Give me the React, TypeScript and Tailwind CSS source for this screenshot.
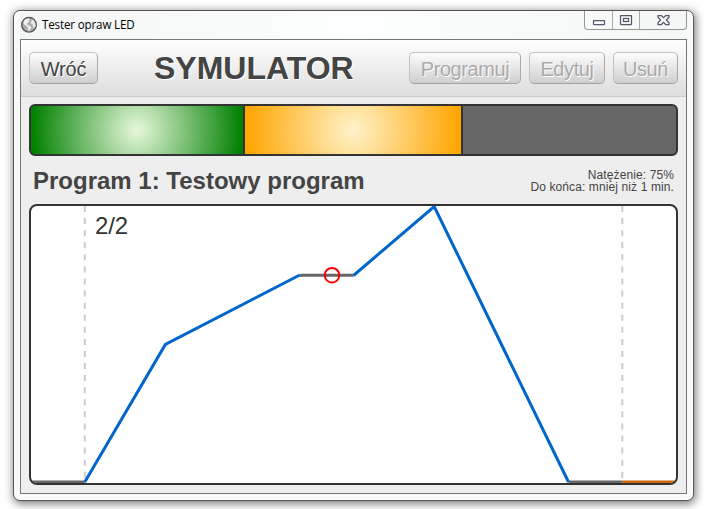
import React from "react";

function ToolButton({ label, width, disabled = false }: { label: string; width: string; disabled?: boolean }) {
  return (
    <button
      disabled={disabled}
      className={`${width} h-8 shrink-0 rounded-[5px] border border-[#c2c2c2] border-r-[#aaa] border-b-[#a2a2a2] bg-linear-to-b from-[#fdfdfd] to-[#cfcfcf] text-center text-[20px] leading-[32px] whitespace-nowrap [text-shadow:1px_1px_0_#fff] ${disabled ? "tracking-[-0.42px] text-[#aaa]" : "tracking-[-0.2px] text-[#444]"}`}
    >
      {label}
    </button>
  );
}

function GlobeIcon() {
  return (
    <svg width="18" height="18" viewBox="0 0 18 18">
      <circle cx="8" cy="8.8" r="7.3" fill="#adadad" stroke="#565656" strokeWidth="1.4" />
      <path d="M2.2 6 4.4 3.3 7.6 2.2 9 3.4 7.8 4.6 8 6 6.3 7.1 5.9 8.3 7.4 9.2 9.6 10.2 10.2 11.6 8.9 13.4 8.3 15.2 7 13.4 6.8 11.2 5.1 9.4 3 8.4Z" fill="#f0f0f0" />
      <path d="m10 2.7 2.6 1.3 1.8 3.2.3 2.6-1.4 2.6-1.5-1.8-.2-2.2-1.8-.8.2-2.2 1-.9Z" fill="#e6e6e6" />
    </svg>
  );
}

function WindowControls() {
  return (
    <div className="flex h-[19px] w-[103px] rounded-b-[4px] border border-t-0 border-[#919594]">
      <div className="w-7 border-r border-[#a6a9a8]">
        <svg width="27" height="18" viewBox="0 0 27 18">
          <rect x="8.5" y="9.5" width="11" height="4" rx=".5" fill="#f7f7f7" stroke="#55576b" strokeWidth="1.25" />
        </svg>
      </div>
      <div className="w-[27px] border-r border-[#a6a9a8]">
        <svg width="26" height="18" viewBox="0 0 26 18">
          <rect x="7.5" y="4.5" width="11" height="9" rx=".5" fill="#f7f7f7" stroke="#55576b" strokeWidth="1.25" />
          <rect x="10.5" y="7.5" width="5" height="3" fill="#fff" stroke="#55576b" strokeWidth="1.25" />
        </svg>
      </div>
      <div className="flex-1">
        <svg width="46" height="18" viewBox="0 0 46 18">
          <path d="M18 4.5h3.4L23.5 6.6l2.1-2.1H29v1.7L26.4 9l2.6 2.8v1.7h-3.4l-2.1-2.1-2.1 2.1H18v-1.7L20.6 9 18 6.2Z" fill="#f4f4f4" stroke="#55576b" strokeWidth="1.25" />
        </svg>
      </div>
    </div>
  );
}

function ProgramChart() {
  return (
    <svg width="645" height="277" viewBox="31 206 645 277" className="block">
      <g stroke="#ccc" strokeWidth="2" strokeDasharray="6 6.08">
        <path d="M84.8 206v277" />
        <path d="M622.3 206v277" />
      </g>
      <g fill="none" strokeWidth="3">
        <g stroke="#666">
          <path d="M31 482H84.8" />
          <path d="M299.8 275.2H353.5" />
          <path d="M568.5 482H622.3" />
        </g>
        <path d="M622.3 482H676" stroke="#cc6600" />
        <g stroke="#0066cc">
          <path d="M84.8 482 165.4 344.5 299.8 275" />
          <path d="M353.5 275.5 434.2 206.5 568.5 482" />
        </g>
      </g>
      <circle cx="332" cy="275.2" r="7.3" fill="none" stroke="#ff0000" strokeWidth="2" />
      <text x="95" y="234" fontSize="24" fill="#333" textLength="33">2/2</text>
    </svg>
  );
}

export default function App() {
  return (
    <div className="h-[509px] w-[707px] overflow-hidden bg-white pt-[10px] pl-[13px] font-['Liberation_Sans',Arial,sans-serif]">
      <div className="h-[491px] w-[681px] rounded-[7px] border border-[#555] bg-[#f8faf9] px-[6px] shadow-[1px_2px_9px_1px_rgba(0,0,0,0.5),inset_0_0_0_1px_#fff]">
        <div className="flex h-[28px] items-start justify-between rounded-t-[6px] bg-linear-to-r from-[#f4f6f5] via-[#fdfefe] to-[#f5f7f6]">
          <div className="flex items-center gap-[3px] pt-[5px] pl-[1px]">
            <GlobeIcon />
            <span className="origin-left scale-x-[0.965] font-['Open_Sans','Noto_Sans',sans-serif] text-[12px] leading-[18px] tracking-[-0.15px] whitespace-nowrap text-black">Tester opraw LED</span>
          </div>
          <WindowControls />
        </div>
        <main className="h-[455px] w-[667px] border border-[#777] bg-[#eee]">
          <header className="flex h-[57px] items-start border-b border-[#ccc] bg-linear-to-b from-white to-[#ddd] px-2 pt-[12px]">
            <ToolButton label="Wróć" width="w-[69px]" />
            <h1 className="ml-[56px] w-[255px] text-[32px] leading-[32px] font-bold whitespace-nowrap text-[#444] [text-shadow:1px_1px_0_#fff]">SYMULATOR</h1>
            <div className="flex gap-2">
              <ToolButton label="Programuj" width="w-[112px]" disabled />
              <ToolButton label="Edytuj" width="w-[76px]" disabled />
              <ToolButton label="Usuń" width="w-[65px]" disabled />
            </div>
          </header>
          <section className="mx-2 mt-[7px] flex h-[52px] w-[649px] overflow-hidden rounded-[6px] border-2 border-[#333] bg-[#333]">
            <div className="w-[212px] bg-[radial-gradient(circle_at_center,#e8f8dc_0,#008000_106px)]" />
            <div className="ml-[2px] w-[216px] bg-[radial-gradient(circle_at_center,#fff3ca_0,#ffa500_108px)]" />
            <div className="ml-[2px] flex-1 bg-[#666]" />
          </section>
          <div className="flex h-[48px] justify-between pr-3 pl-3">
            <h2 className="pt-[11px] text-[24px] leading-[28px] font-bold whitespace-nowrap text-[#444]">Program 1: Testowy program</h2>
            <div className="pt-[13px] text-right text-[12px] leading-[12px] tracking-[0.11px] whitespace-nowrap text-[#444]">
              <p>Natężenie: 75%</p>
              <p>Do końca: mniej niż 1 min.</p>
            </div>
          </div>
          <section className="mx-2 h-[281px] w-[649px] overflow-hidden rounded-[8px] border-2 border-[#333] bg-white">
            <ProgramChart />
          </section>
        </main>
      </div>
    </div>
  );
}
